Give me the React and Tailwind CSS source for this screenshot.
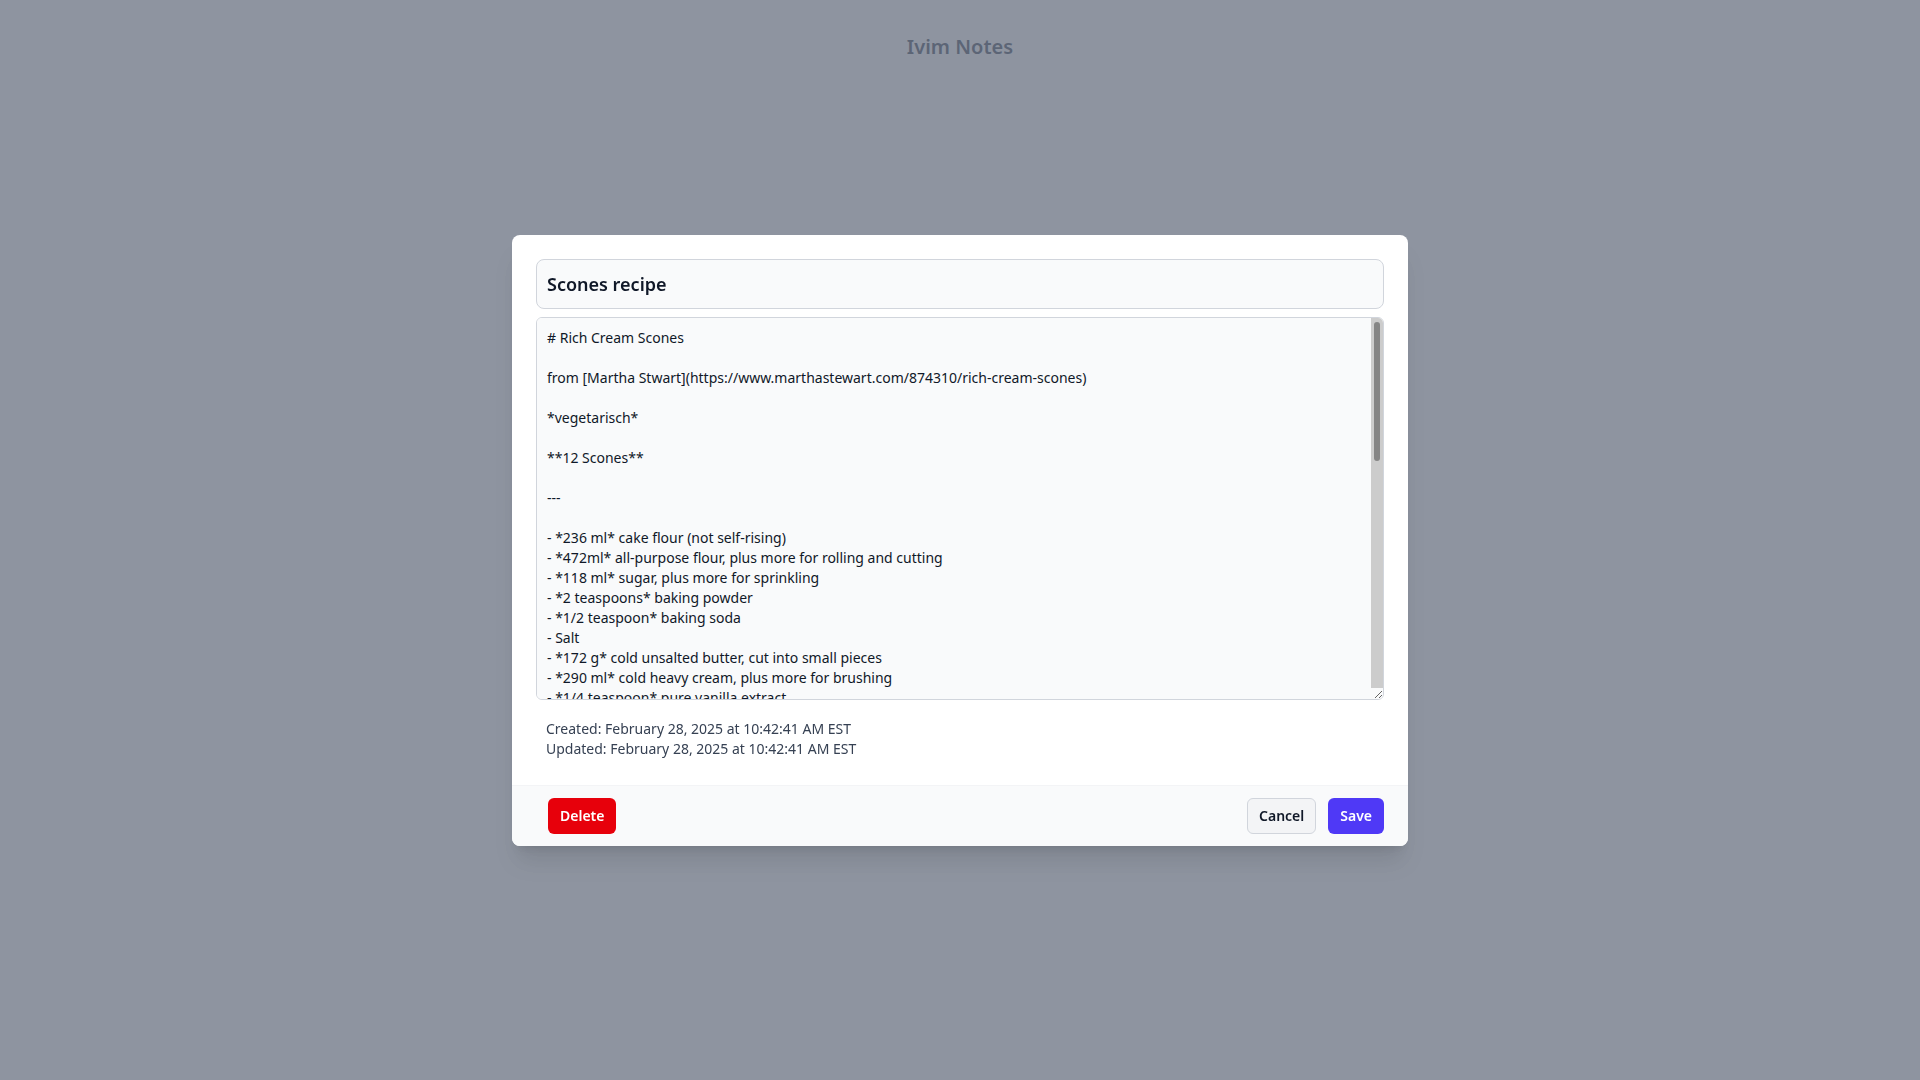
import { useState } from "react";

const initialContent = `# Rich Cream Scones

from [Martha Stwart](https://www.marthastewart.com/874310/rich-cream-scones)

*vegetarisch*

**12 Scones**

---

- *236 ml* cake flour (not self-rising)
- *472ml* all-purpose flour, plus more for rolling and cutting
- *118 ml* sugar, plus more for sprinkling
- *2 teaspoons* baking powder
- *1/2 teaspoon* baking soda
- Salt
- *172 g* cold unsalted butter, cut into small pieces
- *290 ml* cold heavy cream, plus more for brushing
- *1/4 teaspoon* pure vanilla extract
- *1 large* egg yolk
- Coarse sanding sugar, for sprinkling

---

1. Preheat oven to 200°C. Line two baking sheets with parchment paper.

2. In a large bowl, whisk together both flours, sugar, baking powder, baking soda, and a pinch of salt.

3. Using a pastry blender or two knives, cut in butter until mixture resembles coarse meal, with some larger pieces remaining.

4. In a small bowl, whisk together cream, vanilla and egg yolk. Make a well in the center of the flour mixture and pour in the cream mixture.

5. Using a fork, gently stir until dough just comes together. Do not overmix.

6. Turn out dough onto a lightly floured surface and pat into a rectangle about 2 cm thick.

7. Using a floured 6 cm round cutter, cut out scones. Gather scraps and cut out more.

8. Transfer to prepared baking sheets. Brush tops with cream and sprinkle with sanding sugar.

9. Bake until golden brown, 15 to 18 minutes, rotating sheets halfway through.

10. Transfer to a wire rack and let cool slightly. Serve warm.

---

*Tip:* Scones can be frozen unbaked for up to 1 month.
`;

export default function App() {
  const [title, setTitle] = useState("Scones recipe");
  const [content, setContent] = useState(initialContent);

  return (
    <div className="min-h-screen bg-gray-50" style={{ fontFamily: '"Noto Sans", "Open Sans", sans-serif' }}>
      {/* Page header behind the modal */}
      <header className="pt-[33px] text-center">
        <h1 className="text-xl font-semibold text-gray-700">Ivim Notes</h1>
      </header>

      {/* Overlay */}
      <div className="fixed inset-0 bg-gray-500/75 flex items-center justify-center">
        <div className="w-[896px] bg-white rounded-lg shadow-xl overflow-hidden">
          <div className="px-6 pt-6 pb-[26px]">
            <input
              value={title}
              onChange={(e) => setTitle(e.target.value)}
              className="block w-full h-[50px] px-2.5 bg-gray-50 border border-gray-300 rounded-lg text-lg font-semibold text-gray-900 outline-none"
            />
            <div className="relative mt-2">
              <textarea
                value={content}
                onChange={(e) => setContent(e.target.value)}
                className="block w-full h-[383px] pl-2.5 pr-6 py-2.5 bg-gray-50 border border-gray-300 rounded-md text-sm leading-5 text-gray-900 outline-none"
              />
              {/* scrollbar */}
              <div className="absolute top-px right-px bottom-3 w-3 bg-[#cccccc] rounded-tr-[5px] pointer-events-none">
                <div className="mx-[3px] mt-1 h-[139px] rounded-full bg-[#858585]" />
              </div>
            </div>
            <div className="mt-[19px] pl-[10px] text-sm leading-5 text-gray-700">
              <div>Created: February 28, 2025 at 10:42:41 AM EST</div>
              <div>Updated: February 28, 2025 at 10:42:41 AM EST</div>
            </div>
          </div>

          {/* Footer */}
          <div className="flex items-center justify-between bg-gray-50 border-t border-gray-100 pl-9 pr-6 py-3">
            <button className="h-9 px-3 rounded-md bg-red-600 text-sm font-semibold text-white">
              Delete
            </button>
            <div className="flex gap-3">
              <button className="h-9 px-[11px] rounded-md bg-gray-100 border border-gray-300 text-sm font-semibold text-gray-900">
                Cancel
              </button>
              <button className="h-9 px-3 rounded-md bg-indigo-600 text-sm font-semibold text-white">
                Save
              </button>
            </div>
          </div>
        </div>
      </div>
    </div>
  );
}
